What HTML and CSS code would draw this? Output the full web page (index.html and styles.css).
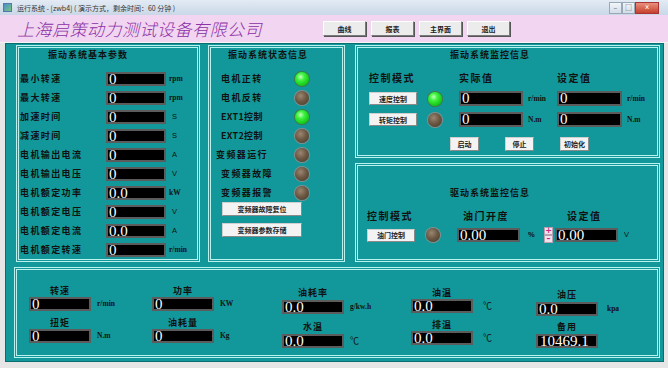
FILE: index.html
```html
<!DOCTYPE html>
<html lang="zh-CN">
<head>
    <meta charset="UTF-8">
    <meta name="viewport" content="width=device-width, initial-scale=1.0">
    <title>运行系统</title>
    <link rel="stylesheet" href="styles.css">
</head>
<body>
    <div class="titlebar">
        <span class="app-icon"></span>
        <span class="caption">运行系统 - [zwb4] ( 演示方式，剩余时间：60 分钟 )</span>
        <div class="win-btns">
            <span class="win-btn">&#8211;</span>
            <span class="win-btn">&#9633;</span>
            <span class="win-btn close">x</span>
        </div>
    </div>

    <div class="header">
        <div class="company">上海启策动力测试设备有限公司</div>
        <div class="nav">
            <button class="nav-btn">曲线</button>
            <button class="nav-btn">报表</button>
            <button class="nav-btn">主界面</button>
            <button class="nav-btn">退出</button>
        </div>
    </div>

    <div class="main">
        <div class="top-row">
            <!-- basic parameters -->
            <section class="panel basic">
                <div class="panel-title">振动系统基本参数</div>
                <div class="param-list">
                    <span class="lbl">最小转速</span><span class="val">0</span><span class="unit">rpm</span>
                    <span class="lbl">最大转速</span><span class="val">0</span><span class="unit">rpm</span>
                    <span class="lbl">加速时间</span><span class="val">0</span><span class="unit sans">S</span>
                    <span class="lbl">减速时间</span><span class="val">0</span><span class="unit sans">S</span>
                    <span class="lbl">电机输出电流</span><span class="val">0</span><span class="unit sans">A</span>
                    <span class="lbl">电机输出电压</span><span class="val">0</span><span class="unit sans">V</span>
                    <span class="lbl">电机额定功率</span><span class="val">0.0</span><span class="unit">kW</span>
                    <span class="lbl">电机额定电压</span><span class="val">0</span><span class="unit sans">V</span>
                    <span class="lbl">电机额定电流</span><span class="val">0.0</span><span class="unit sans">A</span>
                    <span class="lbl">电机额定转速</span><span class="val">0</span><span class="unit">r/min</span>
                </div>
            </section>

            <!-- status lamps -->
            <section class="panel status">
                <div class="panel-title">振动系统状态信息</div>
                <div class="lamp-list">
                    <span class="lbl">电机正转</span><span class="led on"></span>
                    <span class="lbl">电机反转</span><span class="led"></span>
                    <span class="lbl sans-lbl">EXT1控制</span><span class="led on"></span>
                    <span class="lbl sans-lbl">EXT2控制</span><span class="led"></span>
                    <span class="lbl shift">变频器运行</span><span class="led"></span>
                    <span class="lbl">变频器故障</span><span class="led"></span>
                    <span class="lbl">变频器报警</span><span class="led"></span>
                </div>
                <button class="btn wide">变频器故障复位</button>
                <button class="btn wide">变频器参数存储</button>
            </section>

            <div class="right-col">
                <!-- vibration monitor -->
                <section class="panel monitor">
                    <div class="panel-title">振动系统监控信息</div>
                    <div class="monitor-grid">
                        <span class="head">控制模式</span><span></span>
                        <span class="head">实际值</span><span></span>
                        <span class="head">设定值</span><span></span>

                        <button class="btn mode">速度控制</button><span class="led on"></span>
                        <span class="val">0</span><span class="unit">r/min</span>
                        <span class="val">0</span><span class="unit">r/min</span>

                        <button class="btn mode">转矩控制</button><span class="led"></span>
                        <span class="val">0</span><span class="unit">N.m</span>
                        <span class="val">0</span><span class="unit">N.m</span>
                    </div>
                    <div class="actions">
                        <button class="btn small">启动</button>
                        <button class="btn small">停止</button>
                        <button class="btn small">初始化</button>
                    </div>
                </section>

                <!-- drive monitor -->
                <section class="panel drive">
                    <div class="panel-title">驱动系统监控信息</div>
                    <div class="drive-grid">
                        <span class="head">控制模式</span><span></span>
                        <span class="head pad-a">油门开度</span><span></span><span></span>
                        <span class="head pad-b">设定值</span><span></span>

                        <button class="btn mode">油门控制</button><span class="led"></span>
                        <span class="val">0.00</span><span class="unit pct">%</span>
                        <span class="spin"><span class="spin-btn">+</span><span class="spin-btn">&#8211;</span></span>
                        <span class="val">0.00</span><span class="unit sans">V</span>
                    </div>
                </section>
            </div>
        </div>

        <!-- engine readings -->
        <section class="panel meters">
            <div class="col col-a">
                <div class="meas"><span class="meas-label">转速</span><span class="val">0</span><span class="unit">r/min</span></div>
                <div class="meas"><span class="meas-label">扭矩</span><span class="val">0</span><span class="unit">N.m</span></div>
            </div>
            <div class="col col-b">
                <div class="meas"><span class="meas-label">功率</span><span class="val">0</span><span class="unit">KW</span></div>
                <div class="meas"><span class="meas-label">油耗量</span><span class="val">0</span><span class="unit">Kg</span></div>
            </div>
            <div class="col col-c">
                <div class="meas"><span class="meas-label">油耗率</span><span class="val">0.0</span><span class="unit">g/kw.h</span></div>
                <div class="meas"><span class="meas-label">水温</span><span class="val">0.0</span><span class="unit deg">℃</span></div>
            </div>
            <div class="col col-d">
                <div class="meas"><span class="meas-label">油温</span><span class="val">0.0</span><span class="unit deg">℃</span></div>
                <div class="meas"><span class="meas-label">排温</span><span class="val">0.0</span><span class="unit deg">℃</span></div>
            </div>
            <div class="col col-e">
                <div class="meas"><span class="meas-label">油压</span><span class="val">0.0</span><span class="unit">kpa</span></div>
                <div class="meas"><span class="meas-label">备用</span><span class="val plain">10469.1</span><span></span></div>
            </div>
        </section>
    </div>
</body>
</html>
```

FILE: styles.css
```css
body {
    margin: 0;
    width: 668px;
    height: 368px;
    overflow: hidden;
    background-color: #e6e6e6;
    font-family: "Noto Sans CJK SC", sans-serif;
    color: #111;
}
button {
    font-family: inherit;
    padding: 0;
    cursor: pointer;
}

/* window chrome */
.titlebar {
    height: 15px;
    display: flex;
    align-items: center;
    background: linear-gradient(#e3ebf4, #c9d7e7);
    font-size: 7px;
    color: #333;
}
.app-icon {
    width: 7px;
    height: 7px;
    margin: 0 5px 0 3px;
    background: linear-gradient(135deg, #4a8fd0, #7bc47b);
    border: 1px solid #5577aa;
}
.win-btns {
    margin-left: auto;
    margin-right: 9px;
    display: flex;
    align-self: flex-start;
    margin-top: 2px;
}
.win-btn {
    width: 11px;
    height: 10px;
    border: 1px solid #9aa8b8;
    background: linear-gradient(#f2f6fa, #d2dce8);
    font-size: 7px;
    line-height: 9px;
    text-align: center;
    color: #556;
}
.win-btn.close {
    width: 22px;
    background: linear-gradient(#e8907e, #c6402c);
    border-color: #a33;
    color: #fff;
    font-family: "DejaVu Sans", sans-serif;
}

.header {
    height: 27px;
    display: grid;
    grid-template-columns: 323px auto;
    align-items: center;
    background-color: #f2d5f1;
    border-bottom: 1px solid #f4f4f4;
}
.company {
    padding-left: 17px;
    font-size: 17px;
    font-style: italic;
    font-weight: 300;
    letter-spacing: 0.5px;
    color: #8a32a6;
}
.nav {
    display: flex;
    gap: 5px;
}
.nav-btn {
    width: 43px;
    height: 15px;
    background-color: #ececec;
    border: 1px solid;
    border-color: #fff #7a7a7a #7a7a7a #fff;
    box-shadow: 1px 1px 0 #555;
    font-size: 7px;
    font-weight: 700;
    color: #222;
}

/* main teal area */
.main {
    margin: 0 4px 0 5px;
    padding: 1px 3px 3px 8px;
    background-color: #12979a;
    border: 1px solid #0a6d6f;
    display: flex;
    flex-direction: column;
    gap: 5px;
}
.top-row {
    display: flex;
    height: 217px;
}
.panel {
    box-sizing: border-box;
    background-color: #12989a;
    border: 3px double #b9f1ef;
}
.panel-title {
    font-size: 9px;
    line-height: 14px;
    font-weight: 700;
    letter-spacing: 1px;
    color: #111;
}
.lbl {
    font-size: 9px;
    line-height: 14px;
    font-weight: 700;
    letter-spacing: 1.4px;
    white-space: nowrap;
}
.head {
    font-size: 10px;
    line-height: 14px;
    font-weight: 700;
    letter-spacing: 1.5px;
}
.val {
    box-sizing: border-box;
    height: 14px;
    background-color: #000;
    border: 2px solid #5c5c5c;
    padding-left: 1px;
    font-family: "Liberation Serif", serif;
    font-size: 15px;
    line-height: 10px;
    color: #fff;
    overflow: hidden;
}
.unit {
    font-family: "Liberation Serif", serif;
    font-size: 7.5px;
    font-weight: 700;
    line-height: 14px;
    padding-left: 3px;
    color: #111;
}
.unit.sans {
    font-family: "Liberation Sans", sans-serif;
    font-weight: 400;
}
.unit.deg {
    font-size: 9px;
    font-weight: 400;
}
.led {
    width: 14px;
    height: 14px;
    border-radius: 50%;
    background: radial-gradient(circle at 40% 35%, #9b8671 0, #6d5944 45%, #47382a 100%);
    box-shadow: 0 0 0 1px #8c8c8c;
}
.led.on {
    background: radial-gradient(circle at 40% 35%, #c4ffbc 0, #3ef23e 30%, #17c817 70%, #0b8c0b 100%);
    box-shadow: 0 0 0 1px #3f7d3f;
}
.btn {
    box-sizing: border-box;
    height: 14px;
    background-color: #f3f3f3;
    border: 1px solid #cfcfcf;
    border-right-color: #8a8a8a;
    border-bottom-color: #8a8a8a;
    font-size: 7px;
    font-weight: 700;
    color: #222;
}

/* panel 1 */
.basic {
    width: 184px;
    margin-left: 2px;
    margin-right: 8px;
}
.basic .panel-title {
    padding-left: 29px;
}
.param-list {
    margin-top: 10px;
    padding-left: 1px;
    display: grid;
    grid-template-columns: 86px 60px 1fr;
    grid-auto-rows: 19px;
}

/* panel 2 */
.status {
    width: 137px;
    margin-right: 10px;
}
.status .panel-title {
    padding-left: 17px;
}
.lamp-list {
    margin-top: 7px;
    padding-left: 10px;
    display: grid;
    grid-template-columns: 74px 14px;
    grid-auto-rows: 19px;
    align-items: center;
}
.lbl.sans-lbl {
    letter-spacing: 0.3px;
}
.lbl.shift {
    margin-left: -5px;
}
.btn.wide {
    display: block;
    width: 80px;
    margin-left: 11px;
    margin-bottom: 7px;
}

/* panel 3 / 4 */
.right-col {
    width: 305px;
    display: flex;
    flex-direction: column;
    gap: 5px;
}
.monitor {
    height: 113px;
}
.monitor .panel-title,
.drive .panel-title {
    padding-left: 92px;
}
.monitor-grid {
    margin-top: 9px;
    padding-left: 11px;
    display: grid;
    grid-template-columns: 59px 31px 64px 34px 65px 1fr;
    grid-template-rows: 14px 15px 15px;
    row-gap: 6px;
    align-items: center;
}
.monitor-grid .val {
    height: 15px;
    line-height: 11px;
}
.monitor-grid .unit {
    padding-left: 5px;
}
.btn.mode {
    width: 48px;
    height: 13px;
}
.actions {
    margin-top: 10px;
    padding-left: 92px;
    display: flex;
    gap: 26px;
}
.btn.small {
    width: 29px;
}
.drive {
    height: 99px;
    padding-top: 20px;
}
.drive-grid {
    margin-top: 9px;
    padding-left: 9px;
    display: grid;
    grid-template-columns: 59px 31px 63px 24px 11px 63px 1fr;
    grid-template-rows: 14px 14px;
    row-gap: 5px;
    align-items: center;
}
.head.pad-a {
    padding-left: 6px;
}
.head.pad-b {
    padding-left: 12px;
}
.unit.pct {
    padding-left: 8px;
    font-family: "Liberation Sans", sans-serif;
}
.unit.sans {
    padding-left: 6px;
}
.spin {
    display: flex;
    flex-direction: column;
    width: 9px;
}
.spin-btn {
    height: 8px;
    background-color: #efe3ec;
    border: 1px solid #b9a0b3;
    box-sizing: border-box;
    font-family: "DejaVu Sans", sans-serif;
    font-size: 8px;
    line-height: 6px;
    font-weight: 700;
    text-align: center;
    color: #d0247c;
}

/* bottom panel */
.meters {
    height: 91px;
    padding-left: 12px;
    display: flex;
}
.col {
    display: flex;
    flex-direction: column;
    gap: 7px;
    padding-top: 16px;
}
.col-a { width: 123px; }
.col-b { width: 130px; }
.col-c { width: 129px; padding-top: 18px; gap: 8px; }
.col-d { width: 125px; padding-top: 18px; }
.col-e { padding-top: 20px; gap: 6px; }
.meas {
    display: grid;
    grid-template-columns: 62px auto;
}
.meas-label {
    grid-column: 1;
    text-align: center;
    font-size: 9px;
    line-height: 10px;
    font-weight: 700;
    letter-spacing: 1px;
    margin-bottom: 1px;
}
.col-c .meas-label,
.col-e .meas-label {
    margin-bottom: 2px;
}
.meas .val {
    grid-column: 1;
}
.meas .unit {
    grid-column: 2;
    padding-left: 6px;
}
.col-d .unit { padding-left: 10px; }
.col-e .unit { padding-left: 9px; }
.val.plain {
    padding-left: 2px;
}
```
